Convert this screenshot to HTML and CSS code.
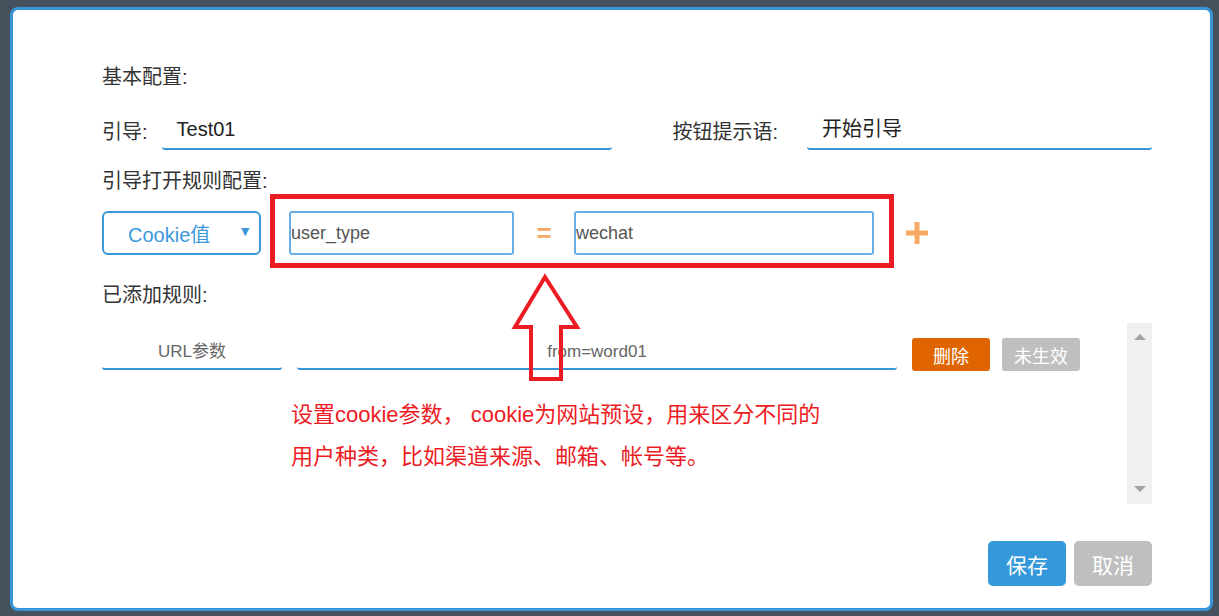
FILE: index.html
```html
<!DOCTYPE html>
<html lang="zh-CN">
<head>
    <meta charset="UTF-8">
    <meta name="viewport" content="width=device-width, initial-scale=1.0">
    <title>引导配置</title>
    <link rel="stylesheet" href="styles.css">
</head>
<body>
    <div class="modal">
        <div class="section-title">基本配置:</div>
        <div class="base-row">
            <div class="field">
                <label class="field-label">引导:</label>
                <div class="line-input guide-input">Test01</div>
            </div>
            <div class="field">
                <label class="field-label">按钮提示语:</label>
                <div class="line-input tip-input">开始引导</div>
            </div>
        </div>

        <div class="section-title gap-top">引导打开规则配置:</div>
        <div class="rule-row">
            <div class="select-box">
                <span>Cookie值</span>
                <span class="select-arrow">&#9660;</span>
            </div>
            <div class="box-input key-input">user_type</div>
            <div class="equal">=</div>
            <div class="box-input value-input">wechat</div>
            <div class="add-btn">
                <svg width="24" height="24" viewBox="0 0 24 24">
                    <rect x="9.5" y="1" width="5" height="22" fill="#f6a964"/>
                    <rect x="1" y="9.5" width="22" height="5" fill="#f6a964"/>
                </svg>
            </div>
        </div>

        <div class="section-title added-title">已添加规则:</div>
        <div class="rule-list">
            <div class="rule-list-body">
                <div class="added-row">
                    <div class="line-input added-type">URL参数</div>
                    <div class="line-input added-value">from=word01</div>
                    <button class="small-btn btn-delete">删除</button>
                    <button class="small-btn btn-off">未生效</button>
                </div>
                <p class="note">设置cookie参数， cookie为网站预设，用来区分不同的<br>用户种类，比如渠道来源、邮箱、帐号等。</p>
            </div>
            <div class="scrollbar">
                <span class="scroll-up"></span>
                <span class="scroll-down"></span>
            </div>
        </div>

        <div class="footer">
            <button class="big-btn btn-save">保存</button>
            <button class="big-btn btn-cancel">取消</button>
        </div>
    </div>

    <!-- 标注层 -->
    <svg class="marks" width="1219" height="616" viewBox="0 0 1219 616">
        <rect x="272.5" y="196.5" width="619" height="69" fill="none" stroke="#ed1c24" stroke-width="5"/>
        <polygon points="545,277 577,327 561,327 561,379 531,379 531,327 515,327" fill="none" stroke="#ed1c24" stroke-width="4" stroke-linejoin="miter"/>
    </svg>
</body>
</html>
```

FILE: styles.css
```css
* {
    box-sizing: border-box;
    margin: 0;
    padding: 0;
}

body {
    position: relative;
    width: 1219px;
    height: 616px;
    overflow: hidden;
    background-color: #45525d;
    font-family: "Liberation Sans", "Noto Sans CJK SC", sans-serif;
    color: #333;
    padding: 7px 6px 5px 10px;
}

.modal {
    width: 1203px;
    height: 604px;
    background: #fff;
    border: 3px solid #3896d8;
    border-radius: 8px;
    padding: 55px 58px 0 89px;
}

.section-title {
    font-size: 20px;
    line-height: 24px;
    height: 24px;
    color: #333;
}

.gap-top {
    margin-top: 19px;
}

.base-row {
    display: flex;
    justify-content: space-between;
    margin-top: 21px;
}

.field {
    display: flex;
    align-items: center;
}

.field-label {
    font-size: 20px;
    color: #333;
}

.line-input {
    height: 40px;
    line-height: 38px;
    border-bottom: 2px solid #3896d8;
    border-radius: 0 0 3px 3px;
    font-size: 20px;
    color: #222;
}

.guide-input {
    width: 450px;
    margin-left: 14px;
    padding-left: 15px;
}

.tip-input {
    width: 345px;
    margin-left: 29px;
    padding-left: 15px;
}

.rule-row {
    display: flex;
    align-items: center;
    margin-top: 18px;
    height: 44px;
}

.select-box {
    width: 159px;
    height: 44px;
    border: 2px solid #3a98da;
    border-radius: 6px;
    display: flex;
    align-items: center;
    color: #3a98da;
    font-size: 20px;
    padding-left: 24px;
}

.select-arrow {
    font-size: 14px;
    margin-left: auto;
    margin-right: 7px;
    margin-top: -4px;
}

.box-input {
    height: 44px;
    border: 2px solid #6aaee6;
    border-radius: 3px;
    font-size: 18px;
    line-height: 40px;
    color: #555;
}

.key-input {
    width: 225px;
    margin-left: 28px;
}

.equal {
    width: 60px;
    text-align: center;
    color: #f6a964;
    font-size: 26px;
    font-weight: bold;
}

.value-input {
    width: 300px;
}

.add-btn {
    margin-left: 31px;
    display: flex;
}

.added-title {
    margin-top: 28px;
}

.rule-list {
    display: flex;
    height: 181px;
    margin-top: 16px;
}

.rule-list-body {
    flex: 1;
    padding-top: 13px;
}

.added-row {
    display: flex;
    align-items: center;
    height: 34px;
}

.added-row .line-input {
    height: 34px;
    line-height: 32px;
    font-size: 17px;
    color: #666;
    text-align: center;
}

.added-type {
    width: 180px;
}

.added-value {
    width: 600px;
    margin-left: 15px;
}

.small-btn {
    width: 78px;
    height: 33px;
    border: none;
    border-radius: 3px;
    color: #fff;
    font-size: 18px;
    font-family: inherit;
    margin-top: 3px;
}

.btn-delete {
    background: #e06500;
    margin-left: 15px;
}

.btn-off {
    background: #bfbfbf;
    margin-left: 12px;
}

.note {
    margin-top: 24px;
    padding-left: 189px;
    font-size: 22px;
    line-height: 42px;
    color: #ed1c24;
}

.scrollbar {
    width: 25px;
    background: #f0f0f0;
    position: relative;
}

.scroll-up,
.scroll-down {
    position: absolute;
    left: 7px;
    width: 0;
    height: 0;
    border-left: 6px solid transparent;
    border-right: 6px solid transparent;
}

.scroll-up {
    top: 11px;
    border-bottom: 6px solid #a3a3a3;
}

.scroll-down {
    bottom: 12px;
    border-top: 6px solid #a3a3a3;
}

.footer {
    display: flex;
    justify-content: flex-end;
    gap: 8px;
    margin-top: 37px;
}

.big-btn {
    width: 78px;
    height: 45px;
    border: none;
    border-radius: 5px;
    color: #fff;
    font-size: 21px;
    font-family: inherit;
}

.btn-save {
    background: #3498db;
}

.btn-cancel {
    background: #bfbfbf;
}

.marks {
    position: absolute;
    top: 0;
    left: 0;
    pointer-events: none;
}
```
